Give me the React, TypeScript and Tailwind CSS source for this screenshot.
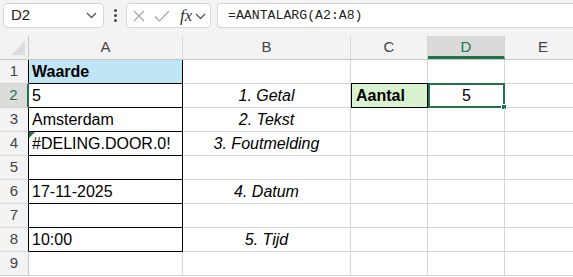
import React from "react";

const cols = [
  { key: "A", w: "w-[154px]" },
  { key: "B", w: "w-[168px]" },
  { key: "C", w: "w-[77px]" },
  { key: "D", w: "w-[77px]" },
  { key: "E", w: "w-[77px]" },
];

const colA = ["Waarde", "5", "Amsterdam", "#DELING.DOOR.0!", "", "17-11-2025", "", "10:00", ""];
const colB = ["", "1. Getal", "2. Tekst", "3. Foutmelding", "", "4. Datum", "", "5. Tijd", ""];

function Chevron() {
  return (
    <svg width="11" height="7" viewBox="0 0 11 7" fill="none" stroke="#555" strokeWidth="1.3">
      <path d="M1 1l4.5 4.5L10 1" />
    </svg>
  );
}

function Toolbar() {
  return (
    <div className="flex h-[36px] items-start gap-0 bg-[#f3f3f3] pt-[3px] pl-[3px]">
      <div className="flex h-[25px] w-[101px] items-center justify-between rounded-[4px] border border-[#d6d6d6] bg-white pl-[7px] pr-[6px]">
        <span className="text-[15px] text-[#222]">D2</span>
        <Chevron />
      </div>
      <div className="flex h-[25px] w-[22px] flex-col items-center justify-center gap-[2px]">
        <span className="h-[3px] w-[3px] rounded-full bg-[#444]" />
        <span className="h-[3px] w-[3px] rounded-full bg-[#444]" />
        <span className="h-[3px] w-[3px] rounded-full bg-[#444]" />
      </div>
      <div className="flex h-[25px] w-[85px] items-center rounded-[4px] border border-[#d6d6d6] bg-white pl-[6px] pr-[3px]">
        <svg width="12" height="12" viewBox="0 0 12 12" stroke="#a6a6a6" strokeWidth="1.2" fill="none">
          <path d="M1 1l10 10M11 1L1 11" />
        </svg>
        <svg className="ml-[9px]" width="16" height="12" viewBox="0 0 16 12" stroke="#a6a6a6" strokeWidth="1.2" fill="none">
          <path d="M1 6.5l4.5 4.5L15 1" />
        </svg>
        <span className="ml-[10px] font-['Liberation_Serif'] text-[17px] italic leading-none text-[#333]">
          fx
        </span>
        <span className="ml-[3px] mt-[2px]">
          <Chevron />
        </span>
      </div>
      <div className="ml-[6px] flex h-[25px] flex-1 items-center rounded-l-[4px] border border-r-0 border-[#d6d6d6] bg-white pl-[10px]">
        <span className="font-['Liberation_Mono'] text-[13.2px] text-[#222]">=AANTALARG(A2:A8)</span>
      </div>
    </div>
  );
}

function HeaderRow() {
  return (
    <div className="flex h-[24px] border-b border-[#c6c6c6] bg-[#f3f3f3]">
      <div className="relative w-[29px] shrink-0 border-r border-[#c6c6c6]">
        <svg className="absolute right-[3px] bottom-[4px]" width="14" height="14" viewBox="0 0 14 14">
          <path d="M14 0V14H0Z" fill="#dcdcdc" />
        </svg>
      </div>
      {cols.map((c) => (
        <div
          key={c.key}
          className={`${c.w} flex shrink-0 items-center justify-center border-r border-[#d6d6d6] text-[15px] ${
            c.key === "D" ? "border-b-[3px] border-b-[#217346] bg-[#dadada] pt-[3px] text-[#217346]" : "text-[#444]"
          }`}
        >
          {c.key}
        </div>
      ))}
    </div>
  );
}

function Row({ i }: { i: number }) {
  const n = i + 1;
  const inA = n <= 8;
  return (
    <div className="flex h-[24px]">
      <div
        className={`flex w-[29px] shrink-0 items-center justify-center border-b border-[#d6d6d6] text-[15px] ${
          n === 2
            ? "border-r-2 border-r-[#217346] bg-[#dcdcdc] text-[#217346]"
            : inA
            ? "border-r border-r-black bg-[#f3f3f3] text-[#444]"
            : "border-r border-r-[#c6c6c6] bg-[#f3f3f3] text-[#444]"
        }`}
      >
        {n}
      </div>
      <div
        className={`relative flex w-[154px] shrink-0 items-center pl-[3px] ${
          inA ? "border-r border-b border-black" : "border-r border-b border-[#d6d6d6]"
        } ${n === 1 ? "bg-[#c0e6f5] font-bold" : "bg-white"}`}
      >
        {n === 4 && (
          <span className="absolute left-0 top-0 h-0 w-0 border-t-[6px] border-r-[6px] border-t-[#1e7a3c] border-r-transparent" />
        )}
        {colA[i]}
      </div>
      <div className="flex w-[168px] shrink-0 items-center justify-center border-r border-b border-[#d6d6d6] italic">
        {colB[i]}
      </div>
      <div
        className={`flex w-[77px] shrink-0 items-center pl-[4px] ${
          n === 2
            ? "-mt-px h-[25px] border border-black bg-[#d9f2d0] font-bold"
            : "border-r border-b border-[#d6d6d6]"
        }`}
      >
        {n === 2 ? "Aantal" : ""}
      </div>
      <div
        className={`relative flex w-[77px] shrink-0 items-center justify-center ${
          n === 2 ? "-mt-px h-[25px] border-2 border-[#217346]" : "border-r border-b border-[#d6d6d6]"
        }`}
      >
        {n === 2 && (
          <>
            5
            <span className="absolute -right-[4px] -bottom-[4px] h-[6px] w-[6px] border border-white bg-[#217346]" />
          </>
        )}
      </div>
      <div className="w-[77px] shrink-0 border-r border-b border-[#d6d6d6]" />
    </div>
  );
}

export default function App() {
  return (
    <div className="h-[277px] w-[573px] overflow-hidden bg-white font-['Liberation_Sans',Arial,sans-serif] text-[16px] text-black">
      <Toolbar />
      <HeaderRow />
      {Array.from({ length: 9 }, (_, i) => (
        <Row key={i} i={i} />
      ))}
    </div>
  );
}
